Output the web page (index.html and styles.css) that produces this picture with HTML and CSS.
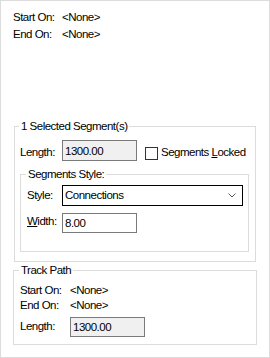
FILE: index.html
```html
<!DOCTYPE html>
<html lang="en">
<head>
<meta charset="utf-8">
<title>Segment Properties</title>
<link rel="stylesheet" href="styles.css">
</head>
<body>
<div class="panel">
  <div class="info">
    <div class="info-row"><span class="info-label">Start On:</span><span>&lt;None&gt;</span></div>
    <div class="info-row"><span class="info-label">End On:</span><span>&lt;None&gt;</span></div>
  </div>

  <fieldset class="group group-segment">
    <legend>1 Selected Segment(s)</legend>
    <div class="field-row length-row">
      <span class="field-label seg-label">Length:</span>
      <input class="textbox readonly" type="text" value="1300.00" readonly>
      <label class="check">
        <input type="checkbox" class="checkbox">
        <span class="check-text">Segments <u>L</u>ocked</span>
      </label>
    </div>

    <fieldset class="group group-style">
      <legend>Segments Style:</legend>
      <div class="field-row style-row">
        <span class="field-label style-label">Style:</span>
        <div class="combo">
          <span class="combo-text">Connections</span>
          <svg class="chevron" width="8" height="5" viewBox="0 0 8 5"><polyline points="0.5,0.5 4,4 7.5,0.5" fill="none" stroke="#555" stroke-width="1"/></svg>
        </div>
      </div>
      <div class="field-row width-row">
        <span class="field-label style-label width-label"><u>W</u>idth:</span>
        <input class="textbox" type="text" value="8.00">
      </div>
    </fieldset>
  </fieldset>

  <fieldset class="group group-track">
    <legend>Track Path</legend>
    <div class="track-row"><span class="track-label">Start On:</span><span>&lt;None&gt;</span></div>
    <div class="track-row"><span class="track-label">End On:</span><span>&lt;None&gt;</span></div>
    <div class="field-row track-length-row">
      <span class="track-label track-len-label">Length:</span>
      <input class="textbox readonly track-input" type="text" value="1300.00" readonly>
    </div>
  </fieldset>
</div>
</body>
</html>
```

FILE: styles.css
```css
* { box-sizing: border-box; }

html, body {
  margin: 0;
  padding: 0;
  background: #ffffff;
}

body {
  font-family: "Liberation Sans", Arial, sans-serif;
  font-size: 11.5px;
  letter-spacing: -0.5px;
  color: #000000;
}

.panel {
  width: 270px;
  height: 358px;
  border: 1px solid #dcdcdc;
  background: #ffffff;
  overflow: hidden;
}

/* top info */
.info {
  padding: 8px 0 0 12px;
}

.info-row {
  display: flex;
  height: 17px;
  line-height: 17px;
  white-space: nowrap;
}

.info-label {
  width: 49px;
  flex: none;
}

/* group boxes */
.group {
  border: 1px solid #dcdcdc;
  margin: 0;
  min-width: 0;
}

.group > legend {
  margin-left: -1px;
  padding: 0 2px;
  height: 13px;
  line-height: 13px;
  white-space: nowrap;
}

.group-segment {
  margin: 77px 13px 0 13px;
  padding: 7px 6px 9px 5px;
}

.group-style {
  margin: 7px 0 0 0;
  padding: 4px 5px 18px 6px;
}

.group-track {
  margin: 2px 12px 0 12px;
  padding: 6px 6px 7px 6px;
}

/* rows */
.field-row {
  display: flex;
  align-items: flex-start;
  white-space: nowrap;
}

.field-label {
  flex: none;
  line-height: 13px;
}

.seg-label {
  width: 42px;
  padding-top: 6px;
}

.style-label {
  width: 35px;
  padding-top: 4px;
}

.width-label {
  padding-top: 2px;
}

.width-row {
  margin-top: 7px;
}

/* text boxes */
.textbox {
  flex: none;
  width: 75px;
  height: 20px;
  margin: 0;
  padding: 0 0 0 2px;
  border: 1px solid #7a7a7a;
  border-radius: 0;
  background: #ffffff;
  color: #000000;
  font: inherit;
  letter-spacing: inherit;
  outline: none;
}

.length-row .textbox {
  height: 21px;
}

.textbox.readonly {
  background: #f0f0f0;
}

/* checkbox */
.check {
  display: flex;
  align-items: flex-start;
  margin-left: 8px;
}

.checkbox {
  appearance: none;
  -webkit-appearance: none;
  flex: none;
  width: 13px;
  height: 13px;
  margin: 7px 0 0 0;
  border: 1px solid #333333;
  background: #ffffff;
}

.check-text {
  margin-left: 3px;
  padding-top: 6px;
  line-height: 13px;
}

/* combo box */
.combo {
  flex: none;
  width: 181px;
  height: 21px;
  border: 1px solid #000000;
  background: #ffffff;
  display: flex;
  align-items: center;
  justify-content: space-between;
  padding: 0 6px 0 2px;
}

.combo-text {
  line-height: 13px;
}

.chevron {
  display: block;
  flex: none;
}

/* track path */
.track-row {
  display: flex;
  height: 15px;
  line-height: 15px;
  white-space: nowrap;
}

.track-label {
  width: 50px;
  flex: none;
}

.track-length-row {
  margin-top: 4px;
}

.track-len-label {
  line-height: 13px;
  padding-top: 3px;
}
```
